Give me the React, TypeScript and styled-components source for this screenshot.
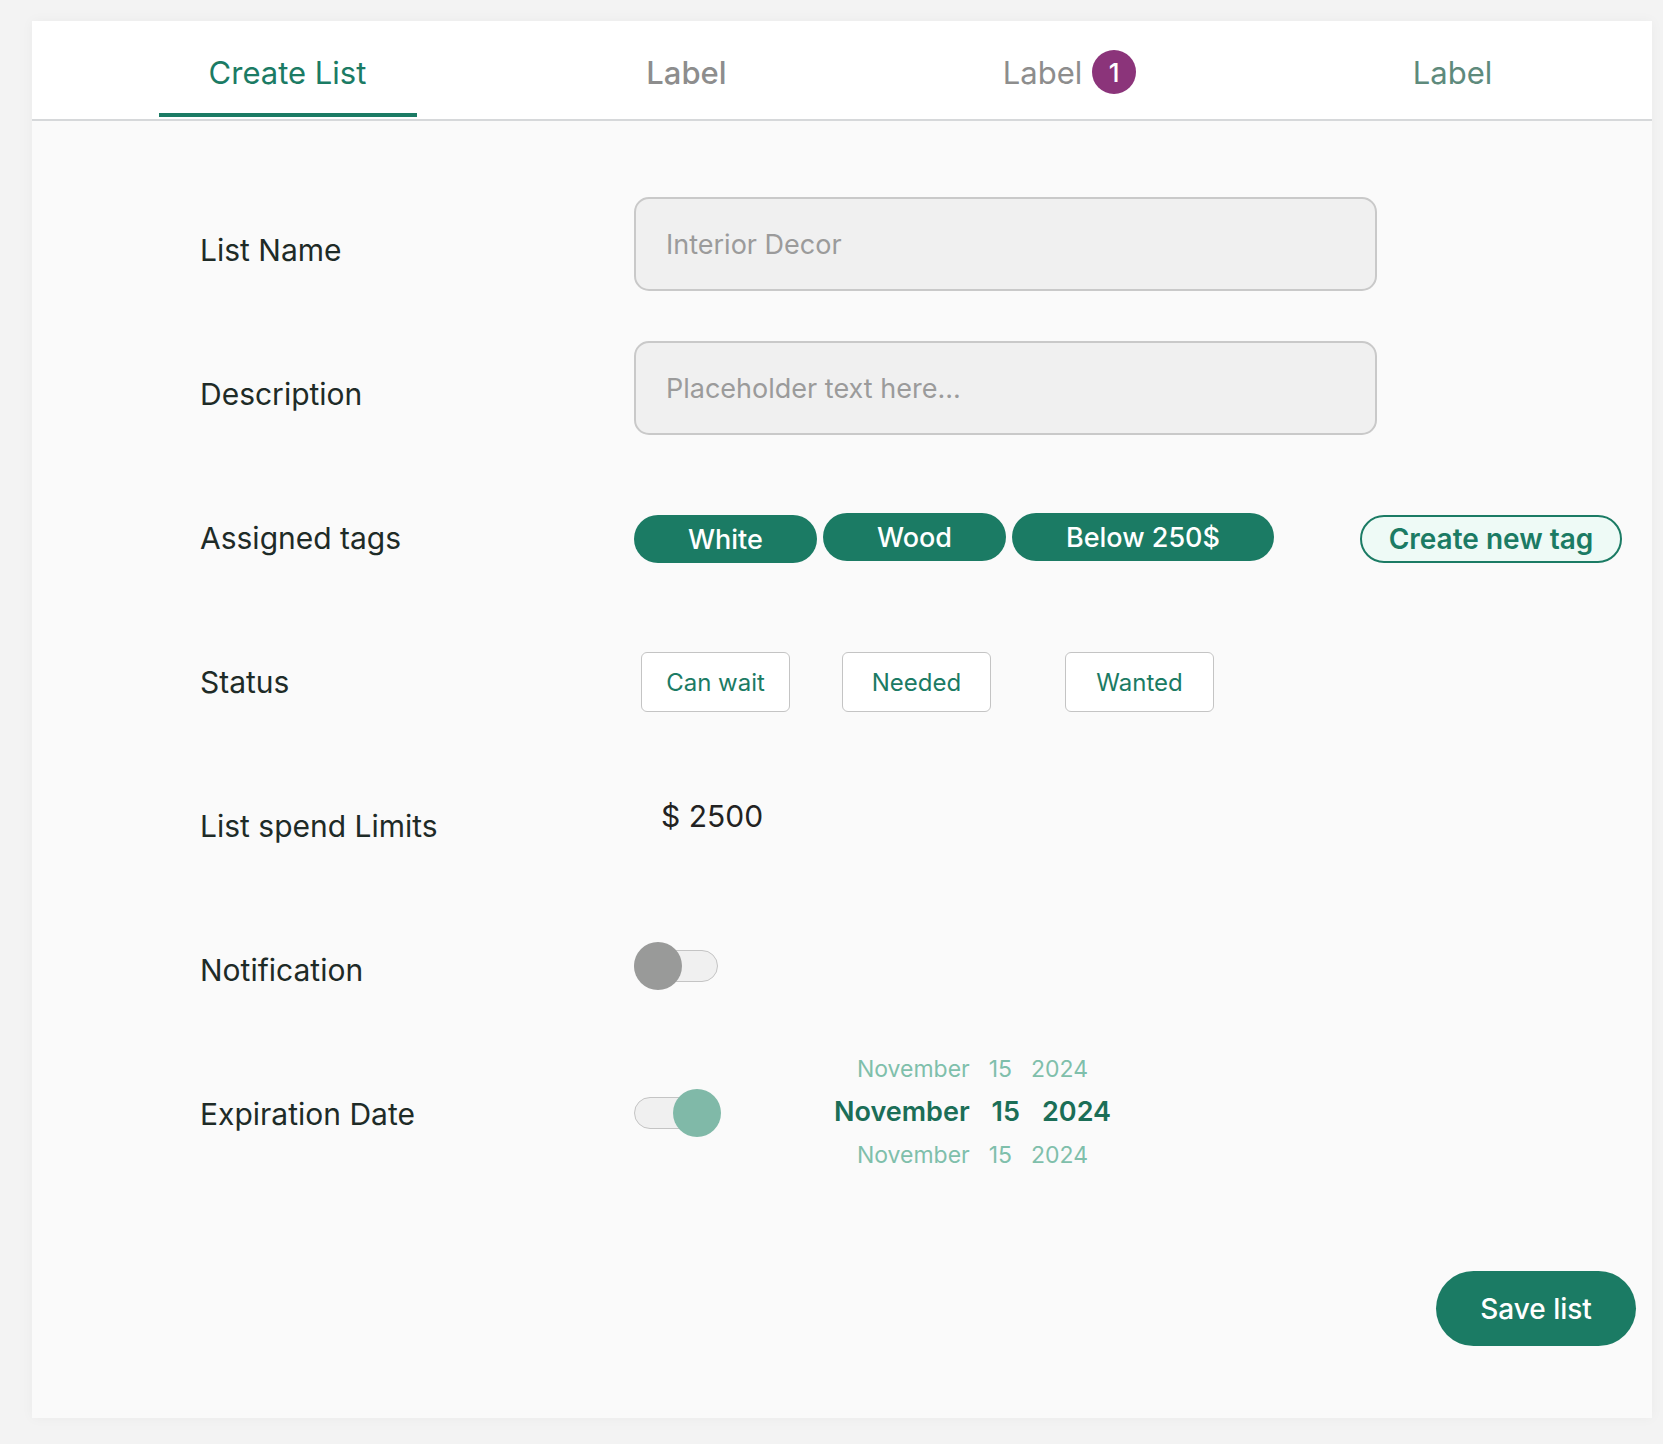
import React, { useState } from "react";
import styled, { createGlobalStyle } from "styled-components";

const GREEN = "#1b7b64";

const GlobalStyle = createGlobalStyle`
  html, body {
    margin: 0;
    padding: 0;
    background: #f3f3f3;
    font-family: Inter, "Noto Sans", sans-serif;
    color: #1e2b27;
  }
  * { box-sizing: border-box; }
`;

const tabs = [
  { label: "Create List", active: true, width: 415 },
  { label: "Label", weight: 500, color: "#8d8d8d", width: 383 },
  { label: "Label", color: "#8d8d8d", badge: 1, width: 383 },
  { label: "Label", color: "#5e8a7c", width: 383 },
];

const tags = ["White", "Wood", "Below 250$"];

const statuses = [
  { label: "Can wait", ml: 7 },
  { label: "Needed", ml: 52 },
  { label: "Wanted", ml: 74 },
];

export default function App() {
  const [notify, setNotify] = useState(false);
  const [expires, setExpires] = useState(true);

  return (
    <>
      <GlobalStyle />
      <StyledPage>
        <StyledCard>
          <StyledTabBar>
            {tabs.map((t, i) => (
              <StyledTab
                key={i}
                $active={!!t.active}
                $color={t.color}
                $weight={t.weight}
                $width={t.width}
              >
                {t.label}
                {t.badge ? <StyledBadge>{t.badge}</StyledBadge> : null}
              </StyledTab>
            ))}
          </StyledTabBar>

          <StyledForm>
            <StyledRow>
              <StyledLabel>List Name</StyledLabel>
              <StyledInput placeholder="Interior Decor" />
            </StyledRow>
            <StyledRow>
              <StyledLabel>Description</StyledLabel>
              <StyledInput placeholder="Placeholder text here..." />
            </StyledRow>
            <StyledRow>
              <StyledLabel>Assigned tags</StyledLabel>
              <StyledControls $nudge={10}>
                <StyledTags>
                  {tags.map((t, i) => (
                    <StyledTag key={t} $shift={i === 0 ? 2 : 0}>
                      {t}
                    </StyledTag>
                  ))}
                </StyledTags>
                <StyledNewTag>Create new tag</StyledNewTag>
              </StyledControls>
            </StyledRow>
            <StyledRow>
              <StyledLabel>Status</StyledLabel>
              <StyledControls $nudge={8}>
                {statuses.map((s) => (
                  <StyledStatus key={s.label} $ml={s.ml}>
                    {s.label}
                  </StyledStatus>
                ))}
              </StyledControls>
            </StyledRow>
            <StyledRow>
              <StyledLabel>List spend Limits</StyledLabel>
              <StyledAmount>$ 2500</StyledAmount>
            </StyledRow>
            <StyledRow>
              <StyledLabel>Notification</StyledLabel>
              <StyledControls $nudge={12}>
                <StyledSwitch $on={notify} onClick={() => setNotify(!notify)}>
                  <StyledKnob $on={notify} />
                </StyledSwitch>
              </StyledControls>
            </StyledRow>
            <StyledRow>
              <StyledLabel>Expiration Date</StyledLabel>
              <StyledControls $nudge={4}>
                <StyledSwitch $on={expires} onClick={() => setExpires(!expires)}>
                  <StyledKnob $on={expires} />
                </StyledSwitch>
                <StyledWheel>
                  <StyledWheelRow>
                    <span>November</span>
                    <span>15</span>
                    <span>2024</span>
                  </StyledWheelRow>
                  <StyledWheelRow $selected>
                    <span>November</span>
                    <span>15</span>
                    <span>2024</span>
                  </StyledWheelRow>
                  <StyledWheelRow>
                    <span>November</span>
                    <span>15</span>
                    <span>2024</span>
                  </StyledWheelRow>
                </StyledWheel>
              </StyledControls>
            </StyledRow>
          </StyledForm>

          <StyledFooter>
            <StyledSave>Save list</StyledSave>
          </StyledFooter>
        </StyledCard>
      </StyledPage>
    </>
  );
}

const StyledPage = styled.div`
  padding: 21px 11px 26px 32px;
  min-height: 1444px;
`;

const StyledCard = styled.div`
  width: 1620px;
  height: 1397px;
  background: #fafafa;
  box-shadow: 0 0 12px rgba(0, 0, 0, 0.04);
  display: flex;
  flex-direction: column;
`;

const StyledTabBar = styled.div`
  display: flex;
  height: 100px;
  padding-left: 48px;
  background: #fff;
  border-bottom: 2px solid #d6d8da;
`;

const StyledTab = styled.div<{
  $active: boolean;
  $color?: string;
  $weight?: number;
  $width: number;
}>`
  width: ${(p) => p.$width}px;
  display: flex;
  align-items: center;
  justify-content: center;
  gap: 10px;
  padding-top: 4px;
  font-size: 31px;
  font-weight: ${(p) => p.$weight ?? 400};
  color: ${(p) => (p.$active ? GREEN : p.$color)};
  position: relative;

  &::after {
    content: "";
    display: ${(p) => (p.$active ? "block" : "none")};
    position: absolute;
    bottom: 2px;
    left: 50%;
    transform: translateX(-50%);
    width: 258px;
    height: 4px;
    background: ${GREEN};
  }
`;

const StyledBadge = styled.span`
  width: 44px;
  height: 44px;
  border-radius: 50%;
  background: #8b347a;
  color: #fff;
  font-size: 26px;
  font-weight: 500;
  display: flex;
  align-items: center;
  justify-content: center;
`;

const StyledForm = styled.div`
  padding: 51px 0 0 168px;
  display: flex;
  flex-direction: column;
`;

const StyledRow = styled.div`
  display: grid;
  grid-template-columns: 434px 1fr;
  align-items: center;
  height: 144px;
`;

const StyledLabel = styled.div`
  font-size: 30px;
  padding-top: 12px;
  color: #1e2b27;
`;

const StyledInput = styled.input`
  width: 743px;
  height: 94px;
  background: #f0f0f0;
  border: 2px solid #c9c9c9;
  border-radius: 15px;
  padding: 0 30px;
  font-family: inherit;
  font-size: 27px;
  color: #333;
  outline: none;

  &::placeholder {
    color: #9b9b9b;
  }
`;

const StyledControls = styled.div<{ $nudge?: number }>`
  display: flex;
  align-items: center;
  padding-top: ${(p) => p.$nudge ?? 0}px;
`;

const StyledTags = styled.div`
  display: flex;
  align-items: center;
  gap: 6px;
`;

const StyledTag = styled.div<{ $shift: number }>`
  height: 48px;
  border-radius: 24px;
  background: ${GREEN};
  color: #fff;
  font-size: 27px;
  font-weight: 500;
  display: flex;
  align-items: center;
  justify-content: center;
  padding: 0 54px;
  margin-top: ${(p) => p.$shift * 2}px;
`;

const StyledNewTag = styled.button`
  margin-left: 86px;
  width: 262px;
  height: 48px;
  border-radius: 24px;
  border: 2px solid ${GREEN};
  background: #eefaf6;
  color: ${GREEN};
  font-family: inherit;
  font-size: 28px;
  font-weight: 600;
  margin-top: 4px;
`;

const StyledStatus = styled.button<{ $ml: number }>`
  margin-left: ${(p) => p.$ml}px;
  width: 149px;
  height: 60px;
  background: #fff;
  border: 1px solid #c4c4c4;
  border-radius: 6px;
  color: ${GREEN};
  font-family: inherit;
  font-size: 24px;
  margin-top: 4px;
`;

const StyledAmount = styled.div`
  padding-left: 27px;
  margin-top: -8px;
  font-size: 30px;
  color: #222;
`;

const StyledSwitch = styled.div<{ $on: boolean }>`
  position: relative;
  width: 84px;
  height: 32px;
  border-radius: 16px;
  background: #f0f0f0;
  border: 1px solid #c4c4c4;
  cursor: pointer;
  margin-top: ${(p) => (p.$on ? "6px" : "-8px")};
`;

const StyledKnob = styled.div<{ $on: boolean }>`
  position: absolute;
  top: 50%;
  width: 48px;
  height: 48px;
  border-radius: 50%;
  transform: translateY(-50%);
  left: ${(p) => (p.$on ? "38px" : "-1px")};
  background: ${(p) => (p.$on ? "#80b9a8" : "#999a99")};
`;

const StyledWheel = styled.div`
  margin-left: 116px;
  display: flex;
  flex-direction: column;
  align-items: center;
  gap: 14px;
  margin-top: 4px;
`;

const StyledWheelRow = styled.div<{ $selected?: boolean }>`
  display: flex;
  gap: ${(p) => (p.$selected ? "22px" : "19px")};
  font-size: ${(p) => (p.$selected ? "27px" : "23px")};
  font-weight: ${(p) => (p.$selected ? 600 : 400)};
  color: ${(p) => (p.$selected ? "#1b6e57" : "#7fbfab")};
  line-height: 1.15;
`;

const StyledFooter = styled.div`
  display: flex;
  justify-content: flex-end;
  padding: 91px 16px 0 0;
`;

const StyledSave = styled.button`
  width: 200px;
  height: 75px;
  border-radius: 38px;
  border: none;
  background: ${GREEN};
  color: #fff;
  font-family: inherit;
  font-size: 28px;
  font-weight: 500;
`;
